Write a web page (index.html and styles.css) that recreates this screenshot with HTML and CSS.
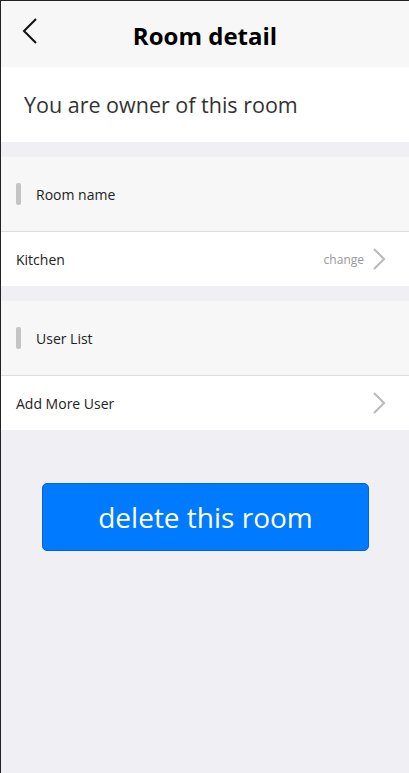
FILE: index.html
```html
<!DOCTYPE html>
<html>
<head>
<meta charset="utf-8">
<link rel="stylesheet" href="styles.css">
</head>
<body>
<div class="page">
  <header class="nav">
    <span class="back">
      <svg width="18" height="28" viewBox="0 0 18 28"><path d="M15 2 L3 14 L15 26" fill="none" stroke="#111" stroke-width="2"/></svg>
    </span>
    <h1 class="title">Room detail</h1>
  </header>
  <div class="owner">You are owner of this room</div>
  <div class="section-head"><span class="bar"></span>Room name</div>
  <div class="row">
    <span class="row-label">Kitchen</span>
    <span class="row-right"><span class="hint">change</span>
      <svg class="chev" width="14" height="24" viewBox="0 0 14 24"><path d="M2 2 L12 12 L2 22" fill="none" stroke="#bbb" stroke-width="2.2"/></svg>
    </span>
  </div>
  <div class="section-head"><span class="bar"></span>User List</div>
  <div class="row">
    <span class="row-label">Add More User</span>
    <span class="row-right">
      <svg class="chev" width="14" height="24" viewBox="0 0 14 24"><path d="M2 2 L12 12 L2 22" fill="none" stroke="#bbb" stroke-width="2.2"/></svg>
    </span>
  </div>
  <div class="actions">
    <button class="delete">delete this room</button>
  </div>
</div>
</body>
</html>
```
FILE: styles.css
```css
html, body { margin: 0; padding: 0; }
body {
  width: 409px;
  height: 773px;
  background: #efeff4;
  font-family: "Open Sans", "Noto Sans", sans-serif;
  overflow: hidden;
}
.page {
  box-sizing: border-box;
  height: 773px;
  border-top: 1px solid #222;
  border-left: 1px solid #222;
  background: #efeff4;
}
.nav {
  height: 66px;
  background: #f7f7f7;
  display: flex;
  align-items: center;
  justify-content: center;
  position: relative;
}
.back {
  position: absolute;
  left: 20px;
  top: 16px;
  display: flex;
}
.title {
  margin: 0;
  font-size: 24px;
  font-weight: 700;
  color: #000;
  transform: translateY(1px);
}
.owner {
  height: 75px;
  background: #fff;
  display: flex;
  align-items: center;
  padding-left: 23px;
  font-size: 21.5px;
  color: #333;
  margin-bottom: 15px;
}
.section-head {
  height: 74px;
  background: #f7f7f7;
  border-bottom: 1px solid #ddd;
  display: flex;
  align-items: center;
  padding-left: 15px;
  font-size: 14px;
  color: #222;
}
.bar {
  width: 5px;
  height: 22px;
  border-radius: 2px;
  background: #c4c4c4;
  margin-right: 15px;
}
.row {
  height: 54px;
  background: #fff;
  display: flex;
  align-items: center;
  justify-content: space-between;
  padding: 0 23px 0 15px;
  margin-bottom: 15px;
  font-size: 14px;
  color: #222;
}
.row-right { display: flex; align-items: center; gap: 8px; }
.hint { font-size: 12px; color: #999; }
.actions {
  padding: 38px 40px 0 41px;
}
.delete {
  width: 100%;
  height: 68px;
  background: #007aff;
  border: 1px solid #0a62c9;
  border-radius: 5px;
  color: #fff;
  font-family: inherit;
  font-size: 28px;
  padding: 0;
}
```
